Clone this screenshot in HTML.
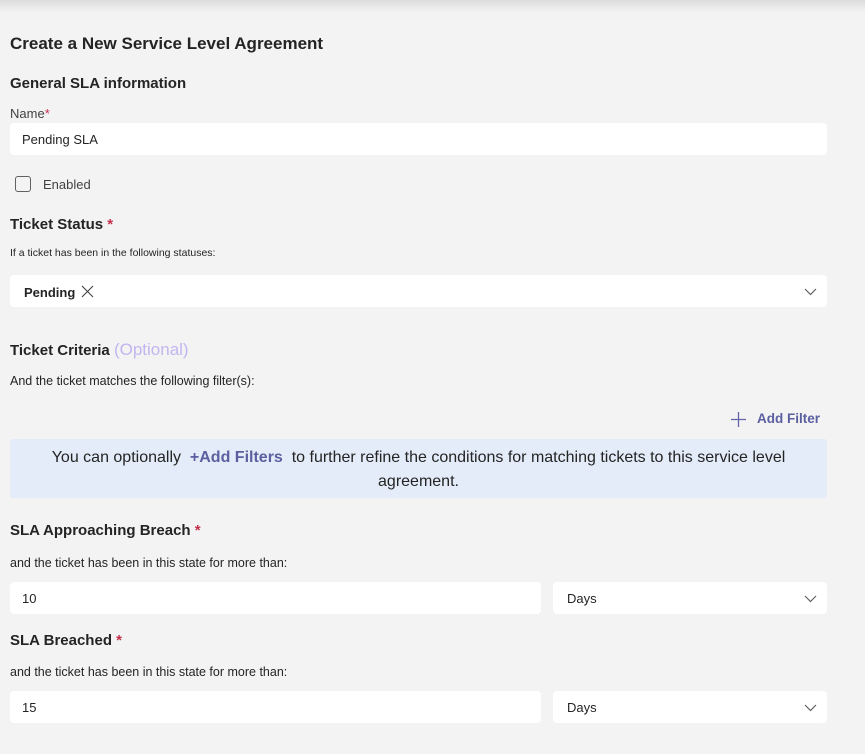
<!DOCTYPE html>
<html><head><style>
*{margin:0;padding:0;box-sizing:border-box}
body{width:865px;height:754px;background:#f3f3f3;font-family:"Liberation Sans",sans-serif;color:#242424;position:relative;overflow:hidden}
.t{position:absolute;white-space:nowrap;line-height:1}
.b{font-weight:bold}
.in{position:absolute;background:#fff;border-radius:4px;height:32px}
.req{color:#c4314b}
.chev{position:absolute;right:10px;top:11px}
</style></head><body>
<div style="position:absolute;left:0;top:0;width:865px;height:12px;background:linear-gradient(#dcdcdc,#f3f3f3)"></div>
<div class="t b" style="left:10px;top:35px;font-size:17px">Create a New Service Level Agreement</div>
<div class="t b" style="left:10px;top:76px;font-size:15px">General SLA information</div>
<div class="t" style="left:10px;top:107px;font-size:13px;color:#424242">Name<span class="req">*</span></div>
<div class="in" style="left:10px;top:123px;width:817px"><span class="t" style="left:12px;top:10px;font-size:13px">Pending SLA</span></div>
<div style="position:absolute;left:15px;top:176px;width:16px;height:16px;border:1px solid #616161;border-radius:3px"></div>
<div class="t" style="left:43px;top:178px;font-size:13px;color:#424242">Enabled</div>
<div class="t b" style="left:10px;top:217px;font-size:15px">Ticket Status <span class="req">*</span></div>
<div class="t" style="left:10px;top:248px;font-size:10.5px">If a ticket has been in the following statuses:</div>
<div class="in" style="left:10px;top:275px;width:817px">
<span class="t" style="left:14px;top:11px;font-size:13px;font-weight:600">Pending</span>
<svg style="position:absolute;left:71px;top:10px" width="13" height="13"><path d="M1 1L12 12M12 1L1 12" stroke="#424242" stroke-width="1.1"/></svg>
<svg class="chev" width="13" height="10"><path d="M1 3L6.5 8.5L12 3" stroke="#616161" fill="none" stroke-width="1.2"/></svg>
</div>
<div class="t b" style="left:10px;top:341px;font-size:15px">Ticket Criteria <span style="font-weight:normal;color:#c3b6f0;font-size:17px">(Optional)</span></div>
<div class="t" style="left:10px;top:375px;font-size:12.5px">And the ticket matches the following filter(s):</div>
<svg style="position:absolute;left:731px;top:412px" width="15" height="15"><path d="M7.5 0V15M0 7.5H15" stroke="#6264a7" stroke-width="1.3"/></svg>
<div class="t b" style="left:757px;top:412px;font-size:13.5px;color:#5b5fa0">Add Filter</div>
<div style="position:absolute;left:10px;top:439px;width:817px;height:59px;background:#e3ecf8;border-radius:3px;text-align:center;font-size:16px;line-height:24px;padding:7px 30px 0">You can optionally &nbsp;<b style="color:#5b5fa0">+Add Filters</b>&nbsp; to further refine the conditions for matching tickets to this service level agreement.</div>
<div class="t b" style="left:10px;top:523px;font-size:15px">SLA Approaching Breach <span class="req">*</span></div>
<div class="t" style="left:10px;top:557px;font-size:12.5px">and the ticket has been in this state for more than:</div>
<div class="in" style="left:10px;top:582px;width:531px"><span class="t" style="left:12px;top:10px;font-size:13px">10</span></div>
<div class="in" style="left:553px;top:582px;width:274px"><span class="t" style="left:14px;top:10px;font-size:13px">Days</span><svg class="chev" width="13" height="10"><path d="M1 3L6.5 8.5L12 3" stroke="#616161" fill="none" stroke-width="1.2"/></svg></div>
<div class="t b" style="left:10px;top:633px;font-size:15px">SLA Breached <span class="req">*</span></div>
<div class="t" style="left:10px;top:666px;font-size:12.5px">and the ticket has been in this state for more than:</div>
<div class="in" style="left:10px;top:691px;width:531px"><span class="t" style="left:12px;top:10px;font-size:13px">15</span></div>
<div class="in" style="left:553px;top:691px;width:274px"><span class="t" style="left:14px;top:10px;font-size:13px">Days</span><svg class="chev" width="13" height="10"><path d="M1 3L6.5 8.5L12 3" stroke="#616161" fill="none" stroke-width="1.2"/></svg></div>
</body></html>
